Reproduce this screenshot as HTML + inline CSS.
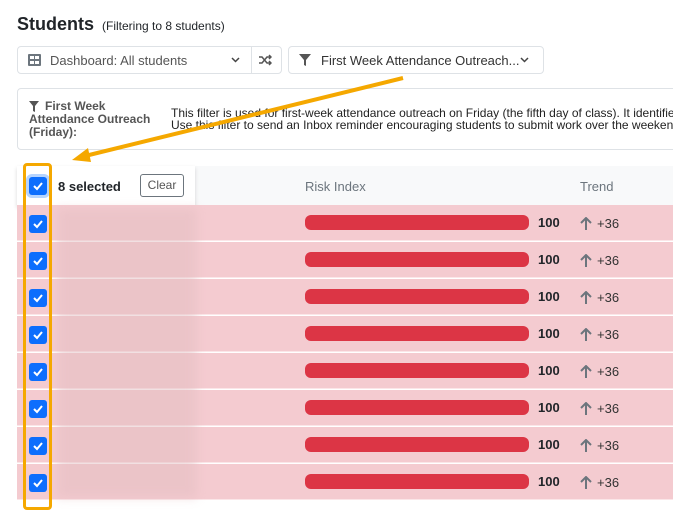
<!DOCTYPE html>
<html><head><style>
*{box-sizing:border-box;margin:0;padding:0}
body{width:673px;height:513px;overflow:hidden;background:#fff;font-family:"Liberation Sans",sans-serif;color:#212529;position:relative}
.a{position:absolute}
.box{border:1px solid #dee2e6;border-radius:4px;background:#fff}
.row{position:absolute;left:17px;width:656px;height:36px;background:#f4cbd0;border-bottom:1px solid #fbe6e8}
.cb{position:absolute;left:29px;width:18px;height:18px;background:#0d6efd;border-radius:3px}
.cb svg{position:absolute;left:3px;top:3px}
.bar{position:absolute;left:305px;width:224px;height:15px;background:#dc3545;border-radius:6px}
.num{position:absolute;left:538px;font-size:13px;font-weight:bold}
.tr{position:absolute;left:580px;font-size:13px;color:#333}
.blur{position:absolute;left:57px;width:140px;background:#e2bcc0;filter:blur(5px);opacity:.45}
</style></head><body>
<div class="a" style="left:17px;top:14px;font-size:18px;font-weight:bold">Students</div>
<div class="a" style="left:102px;top:19px;font-size:12px">(Filtering to 8 students)</div>
<div class="a box" style="left:17px;top:46px;width:265px;height:28px"></div>
<div class="a" style="left:251px;top:47px;width:1px;height:26px;background:#dee2e6"></div>
<svg class="a" style="left:28px;top:54px" width="13" height="12"><rect x="0" y="0" width="13" height="12" rx="1" fill="#6c757d"/><rect x="2" y="2" width="4" height="3" fill="#fff"/><rect x="7" y="2" width="4" height="3" fill="#fff"/><rect x="2" y="7" width="4" height="3" fill="#fff"/><rect x="7" y="7" width="4" height="3" fill="#fff"/></svg>
<div class="a" style="left:50px;top:53px;font-size:13px;color:#555">Dashboard: All students</div>
<svg class="a" style="left:231px;top:57px" width="9" height="6"><path d="M1 1L4.5 4.5L8 1" stroke="#444" stroke-width="1.5" fill="none"/></svg>
<svg class="a" style="left:259px;top:54px" width="13" height="12"><path d="M0 3H3L8 9H12M0 9H3L8 3H12M10 1L12 3L10 5M10 7L12 9L10 11" stroke="#555" stroke-width="1.5" fill="none"/></svg>
<div class="a box" style="left:288px;top:46px;width:256px;height:28px"></div>
<svg class="a" style="left:299px;top:54px" width="12" height="12"><path d="M0 0H12L7 6V12L5 11V6Z" fill="#555"/></svg>
<div class="a" style="left:321px;top:53px;font-size:13px;color:#333">First Week Attendance Outreach...</div>
<svg class="a" style="left:520px;top:57px" width="9" height="6"><path d="M1 1L4.5 4.5L8 1" stroke="#444" stroke-width="1.5" fill="none"/></svg>
<div class="a box" style="left:17px;top:88px;width:670px;height:62px"></div>
<svg class="a" style="left:29px;top:101px" width="10" height="11"><path d="M0 0H10L6 5V11L4 10V5Z" fill="#555"/></svg>
<div class="a" style="left:29px;top:100px;font-size:12px;font-weight:bold;color:#555;line-height:13px;width:135px;text-indent:16px">First Week<br><span style="text-indent:0">Attendance Outreach</span><br>(Friday):</div>
<div class="a" style="left:171px;top:107px;font-size:12px;line-height:12px;white-space:nowrap;color:#222">This filter is used for first-week attendance outreach on Friday (the fifth day of class). It identifies<br>Use this filter to send an Inbox reminder encouraging students to submit work over the weekend</div>
<div class="a" style="left:17px;top:166px;width:656px;height:40px;background:#f8f9fa;border-bottom:1px solid #e9ecef"></div>
<div class="a" style="left:17px;top:166px;width:178px;height:40px;background:#fff;box-shadow:0 2px 4px rgba(0,0,0,.15)"></div>
<div class="cb" style="top:177px;box-shadow:0 0 0 3px #b6d4fe"><svg width="12" height="12"><path d="M2 6L5 9L10 3" stroke="#fff" stroke-width="2" fill="none"/></svg></div>
<div class="a" style="left:58px;top:179px;font-size:13px;font-weight:bold">8 selected</div>
<div class="a" style="left:140px;top:174px;width:44px;height:23px;border:1px solid #6c757d;border-radius:3px;font-size:12px;color:#555;text-align:center;line-height:21px">Clear</div>
<div class="a" style="left:305px;top:179px;font-size:13px;color:#6c757d">Risk Index</div>
<div class="a" style="left:580px;top:179px;font-size:13px;color:#6c757d">Trend</div>
<div class="row" style="top:205px"></div><div class="row" style="top:242px"></div><div class="row" style="top:279px"></div><div class="row" style="top:316px"></div><div class="row" style="top:353px"></div><div class="row" style="top:390px"></div><div class="row" style="top:427px"></div><div class="row" style="top:464px"></div>
<div class="blur" style="top:208px;height:290px"></div>
<div id="rows"></div>
<script>
let h='';for(let i=0;i<8;i++){let y=205+i*37;
h+=`<div class="cb" style="top:${y+10}px"><svg width="12" height="12"><path d="M2 6L5 9L10 3" stroke="#fff" stroke-width="2" fill="none"/></svg></div><div class="bar" style="top:${y+10}px"></div><div class="num" style="top:${y+10}px">100</div><svg class="a" style="left:580px;top:${y+12}px" width="12" height="13"><path d="M6 13V1M1 6L6 1L11 6" stroke="#6c757d" stroke-width="2" fill="none"/></svg><div class="tr" style="left:597px;top:${y+11}px">+36</div>`;}
document.getElementById('rows').innerHTML=h;
</script>
<div class="a" style="left:23px;top:163px;width:29px;height:347px;border:3px solid #f5a800;border-radius:4px"></div>
<svg class="a" style="left:0;top:0" width="673" height="513"><line x1="403" y1="78" x2="85" y2="156" stroke="#f5a800" stroke-width="4"/><path d="M72 160L88 148L91 162Z" fill="#f5a800"/></svg>
</body></html>
